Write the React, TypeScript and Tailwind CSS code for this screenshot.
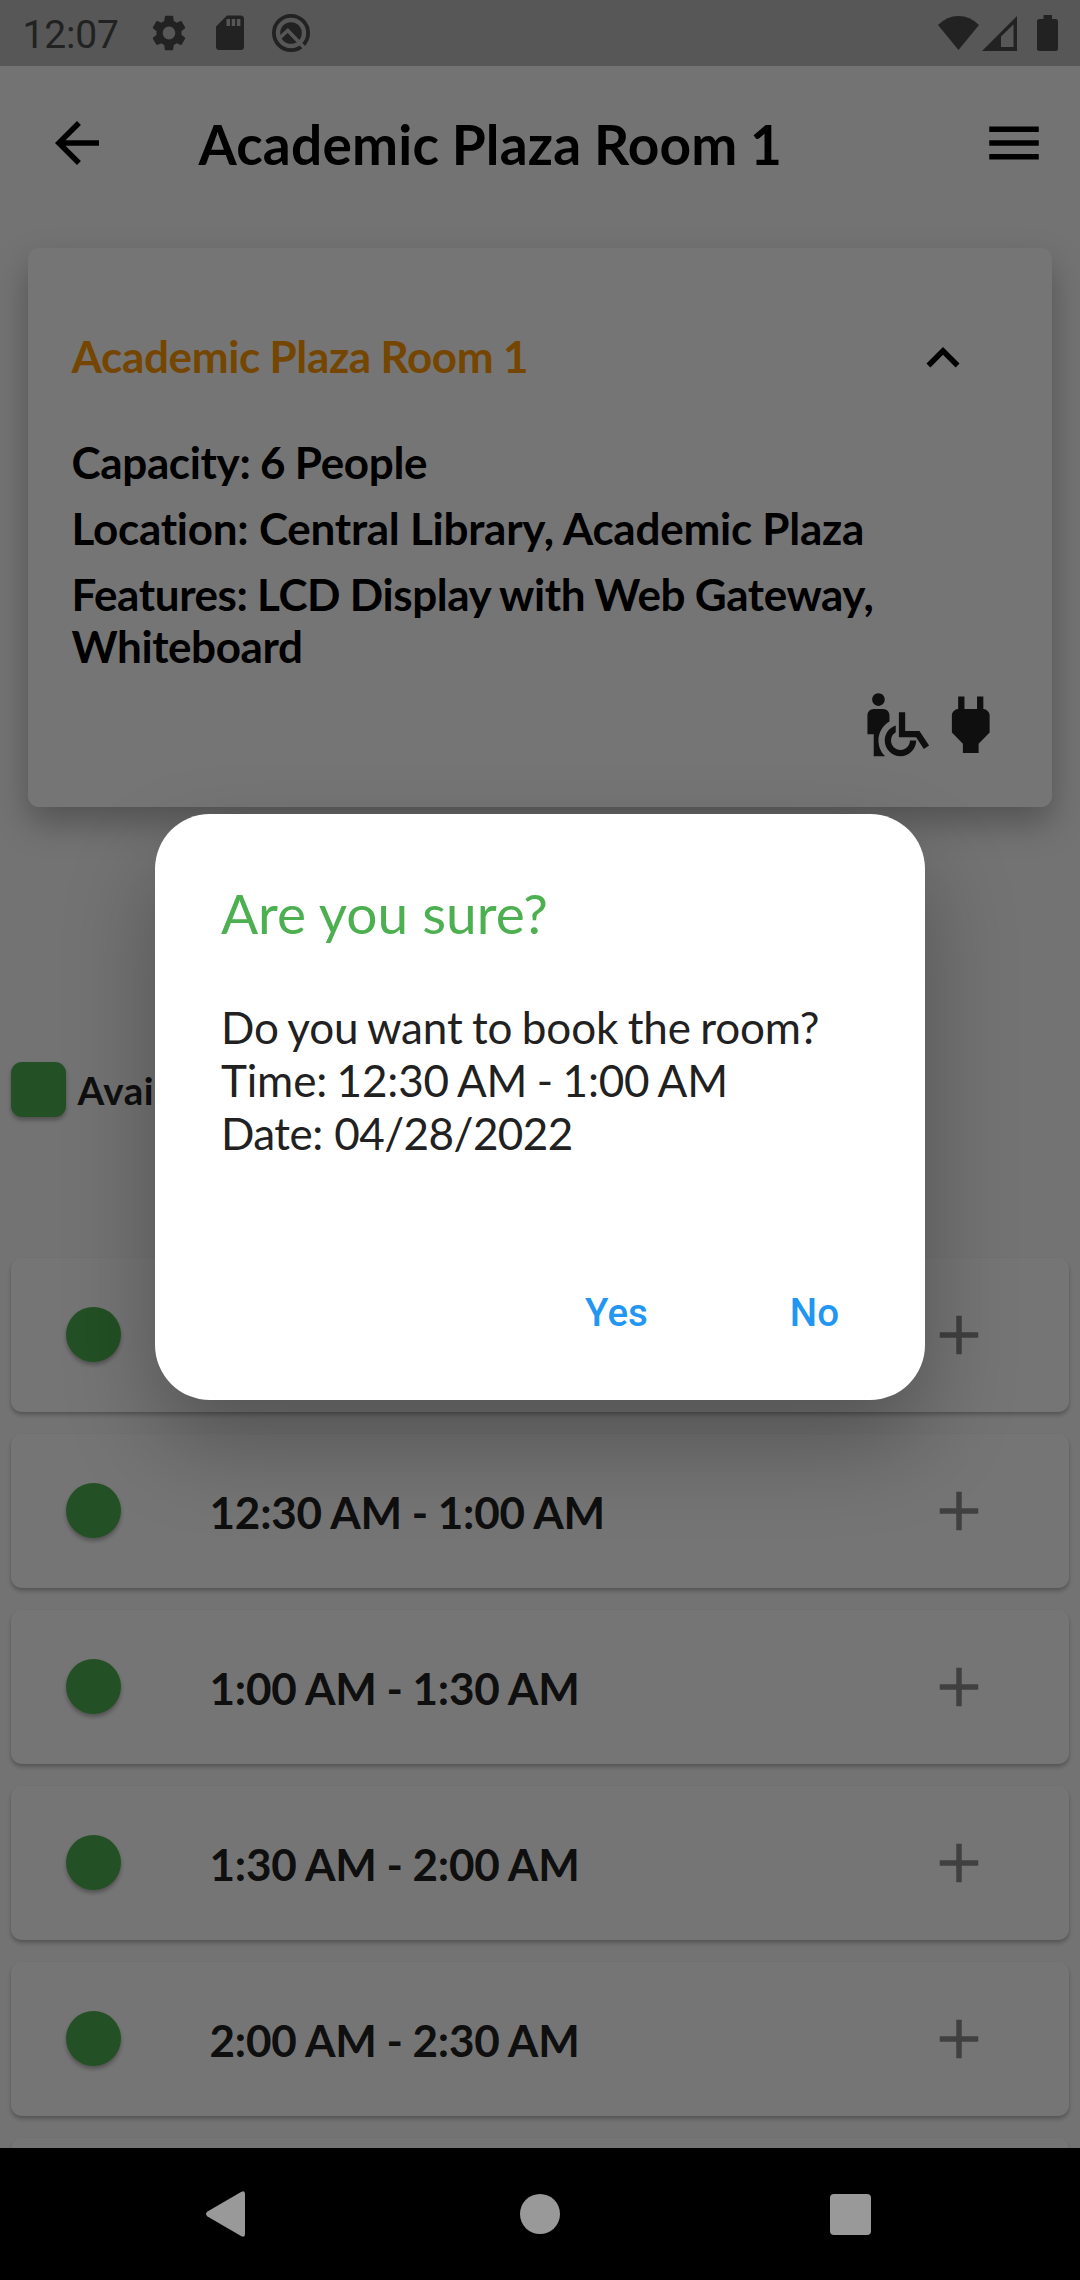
import { MdAdd, MdArrowBack, MdExpandLess, MdMenu, MdPower, MdSettings, MdWheelchairPickup } from "react-icons/md";

const slots = [
  "",
  "12:30 AM - 1:00 AM",
  "1:00 AM - 1:30 AM",
  "1:30 AM - 2:00 AM",
  "2:00 AM - 2:30 AM",
  "",
];

function StatusBar() {
  return (
    <div className="flex h-[66px] shrink-0 items-center bg-[#bdbdbd] text-[#4a4a4a]">
      <span className="ml-[22.5px] w-[128px] pt-[4px] font-[Roboto,sans-serif] text-[39px] leading-[62px] tracking-[-0.2px]">
        12:07
      </span>
      <svg className="ml-px h-[36px] w-[34px]" viewBox="2.2 2 19.6 20" fill="currentColor" preserveAspectRatio="none">
        <MdSettings size={24} />
      </svg>
      <svg className="ml-[30px] h-[36px] w-[28px]" viewBox="0 0 28 36" fill="currentColor">
        <path
          fillRule="evenodd"
          d="M11 .5h13.5A3.5 3.5 0 0 1 28 4v27.500a3.500 3.500 0 0 1-3.500 3.500h-21A3.500 3.500 0 0 1 0 31.500V11.500zM10.500 4v7h3.500V4zm5.200 0v7h3.500V4zm5.200 0v7h3.500V4z"
        />
      </svg>
      <svg className="ml-[28px] h-[38px] w-[38px]" viewBox="0 0 38 38" fill="none">
        <circle cx="19" cy="19" r="17.100" stroke="currentColor" strokeWidth="3.800" />
        <circle cx="19" cy="19" r="10.800" fill="currentColor" />
        <path d="M7 24.500l8.800-8L34 35.500" stroke="#bdbdbd" strokeWidth="3.600" />
      </svg>
      <svg className="ml-auto h-[34px] w-[41px]" viewBox="0 0 41 34" fill="currentColor">
        <path d="M0 9Q9 0 20.500 0T41 9L20.500 34z" />
      </svg>
      <svg className="ml-[3px] h-[35px] w-[35px]" viewBox="0 0 35 35" fill="currentColor">
        <path fillRule="evenodd" d="M35 0v35H0zM31.500 8.500L19 20.500v10.500h12.500z" />
      </svg>
      <svg className="mr-[22px] ml-[20px] h-[36px] w-[21px]" viewBox="0 0 21 36" fill="currentColor">
        <path d="M6.500 0h8.500v4h3.500a2.500 2.500 0 0 1 2.500 2.500v27a2.500 2.500 0 0 1-2.500 2.500h-16a2.500 2.500 0 0 1-2.500-2.500v-27A2.500 2.500 0 0 1 2.500 4h4z" />
      </svg>
    </div>
  );
}

function AppBar() {
  return (
    <header className="flex h-[154px] shrink-0 items-center pr-[33px] pl-[44px] text-black">
      <MdArrowBack size={66} />
      <h1 className="ml-[88.5px] flex-1 pt-[1px] text-[55px] leading-[66px] font-bold tracking-[0.2px] [word-spacing:-1px]">
        Academic Plaza Room 1
      </h1>
      <MdMenu size={66} />
    </header>
  );
}

function RoomCard() {
  return (
    <section className="mx-[28px] mt-[27.5px] flex h-[559.5px] shrink-0 flex-col rounded-[11px] bg-white px-[43.5px] pt-[77.5px] text-[44px] leading-[52.8px] font-bold tracking-[-0.35px] text-black shadow-[0_16px_34px_rgba(0,0,0,0.28)] [word-spacing:-0.7px]">
      <div className="flex h-[66px] items-center justify-between pr-[33px]">
        <h2 className="pb-[3px] text-[#ff9800]">Academic Plaza Room 1</h2>
        <MdExpandLess size={66} />
      </div>
      <div className="mt-[45px] flex flex-col gap-[13.2px]">
        <p>Capacity: 6 People</p>
        <p className="tracking-[-0.25px] [word-spacing:0px]">Location: Central Library, Academic Plaza</p>
        <p className="leading-[52.3px] tracking-[-0.4px]">Features: LCD Display with Web Gateway, Whiteboard</p>
      </div>
      <div className="mt-[14px] flex justify-end text-[#212121]">
        <MdWheelchairPickup size={75.5} />
        <MdPower size={75.5} />
      </div>
    </section>
  );
}

function SlotRow({ label }: { label: string }) {
  return (
    <li className="flex h-[154px] shrink-0 items-center rounded-[11px] bg-white pr-[77px] pl-[55px] shadow-[0_3px_4px_rgba(0,0,0,0.24),0_1px_2px_rgba(0,0,0,0.06)]">
      <span className="size-[55px] rounded-full bg-[#4caf50] shadow-[0_3px_4px_rgba(0,0,0,0.3)]" />
      <span className="ml-[88.5px] flex-1 pt-[3px] text-[44px] leading-[52.8px] font-bold tracking-[-0.2px] text-[#212121] [word-spacing:-0.7px]">
        {label}
      </span>
      <MdAdd size={66} className="text-black/45" />
    </li>
  );
}

function ConfirmDialog() {
  return (
    <div className="absolute inset-x-0 top-0 flex h-[2148px] items-center justify-center bg-black/54 pt-[66px]">
      <div
        role="dialog"
        className="flex h-[586px] w-[770px] flex-col rounded-[55px] bg-white px-[66px] pt-[66px] text-[#212121] shadow-[0_44px_90px_rgba(0,0,0,0.28)]"
      >
        <h2 className="text-[55px] leading-[66px] text-[#4caf50]">Are you sure?</h2>
        <p className="mt-[55px] text-[44px] leading-[52.8px] tracking-[-0.15px] [word-spacing:-1.6px]">
          Do you want to book the room?
          <br />
          Time: 12:30 AM - 1:00 AM
          <br />
          <span className="tracking-[-0.55px] [word-spacing:1px]">Date: 04/28/2022</span>
        </p>
        <div className="mt-[130px] flex justify-end gap-[142px] pr-[20px] font-[Roboto,sans-serif] text-[38.5px] leading-[48px] font-medium text-[#2196f3]">
          <button>Yes</button>
          <button>No</button>
        </div>
      </div>
    </div>
  );
}

function NavBar() {
  return (
    <nav className="flex h-[132px] shrink-0 items-center bg-black pr-[209px] pl-[206px] text-[#999]">
      <svg className="h-[46px] w-[39px]" viewBox="0 0 39 46" fill="currentColor">
        <path d="M1.500 20.500L35 1Q39-1 39 3v40q0 4-4 2L1.500 25.500q-3-2.500 0-5z" />
      </svg>
      <span className="ml-[275px] size-[40px] rounded-full bg-[#999]" />
      <span className="ml-auto size-[41px] rounded-[4px] bg-[#999]" />
    </nav>
  );
}

export default function App() {
  return (
    <div className="relative h-[2280px] w-[1080px] overflow-hidden bg-black font-[Lato,sans-serif]">
      <main className="flex h-[2148px] flex-col overflow-hidden bg-[#fafafa]">
        <StatusBar />
        <AppBar />
        <RoomCard />
        <div className="mt-[255px] ml-[11px] flex shrink-0 items-center gap-[11.5px]">
          <span className="size-[55px] rounded-[11px] bg-[#4caf50] shadow-[0_3px_4px_rgba(0,0,0,0.3)]" />
          <span className="text-[38.5px] leading-[46px] font-bold tracking-[0.6px] text-[#212121]">Available</span>
        </div>
        <ul className="mx-[11px] mt-[140.5px] flex flex-col gap-[22px]">
          {slots.map((label, i) => (
            <SlotRow key={i} label={label} />
          ))}
        </ul>
      </main>
      <NavBar />
      <ConfirmDialog />
    </div>
  );
}
